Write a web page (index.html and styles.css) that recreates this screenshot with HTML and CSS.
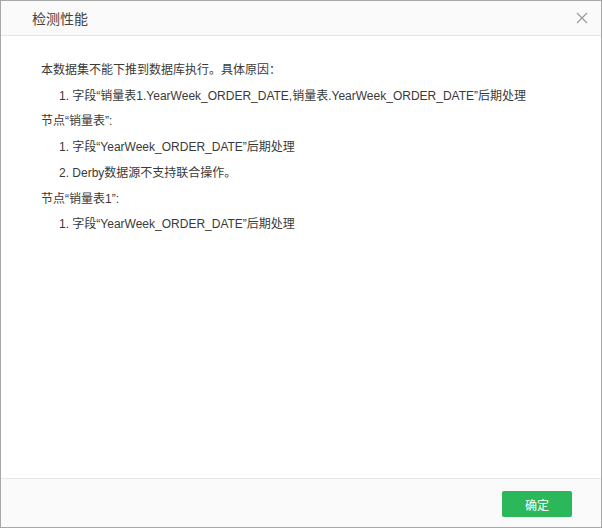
FILE: index.html
```html
<!DOCTYPE html>
<html>
<head>
<meta charset="utf-8">
<link rel="stylesheet" href="styles.css">
</head>
<body>
<div class="dialog">
  <div class="header">
    <span class="title">检测性能</span>
    <svg class="close" width="12" height="12" viewBox="0 0 12 12"><path d="M1 1L11 11M11 1L1 11" stroke="#999" stroke-width="1.1" fill="none"/></svg>
  </div>
  <div class="content">
    <div class="line">本数据集不能下推到数据库执行。具体原因：</div>
    <div class="line item">1. 字段“销量表1.YearWeek_ORDER_DATE,销量表.YearWeek_ORDER_DATE”后期处理</div>
    <div class="line">节点“销量表”:</div>
    <div class="line item">1. 字段“YearWeek_ORDER_DATE”后期处理</div>
    <div class="line item">2. Derby数据源不支持联合操作。</div>
    <div class="line">节点“销量表1”:</div>
    <div class="line item">1. 字段“YearWeek_ORDER_DATE”后期处理</div>
  </div>
  <div class="footer">
    <button class="ok">确定</button>
  </div>
</div>
</body>
</html>
```
FILE: styles.css
```css
html, body {
  margin: 0;
  padding: 0;
  background: #fff;
}
.dialog {
  width: 602px;
  height: 528px;
  box-sizing: border-box;
  border: 1px solid #a8a8a8;
  display: flex;
  flex-direction: column;
  font-family: "Liberation Sans", "Noto Sans CJK SC", sans-serif;
  color: #3a3a3a;
}
.header {
  height: 34px;
  background: #fafafa;
  border-bottom: 1px solid #e6e6e6;
  display: flex;
  align-items: center;
  justify-content: space-between;
  padding: 0 13px 0 31px;
}
.title {
  font-size: 14px;
  color: #444;
}
.close {
  display: block;
}
.content {
  flex: 1;
  padding: 22px 0 0 40px;
  font-size: 12px;
  line-height: 25.7px;
}
.item {
  padding-left: 18px;
}
.footer {
  height: 49px;
  box-sizing: border-box;
  background: #fafafa;
  border-top: 1px solid #e6e6e6;
  display: flex;
  justify-content: flex-end;
  align-items: flex-start;
  padding: 12px 29px 0 0;
}
.ok {
  width: 70px;
  height: 26px;
  border: none;
  border-radius: 2px;
  background: #2bb85a;
  color: #fff;
  font-family: "Liberation Sans", "Noto Sans CJK SC", sans-serif;
  font-size: 12px;
  padding: 0;
}
```
